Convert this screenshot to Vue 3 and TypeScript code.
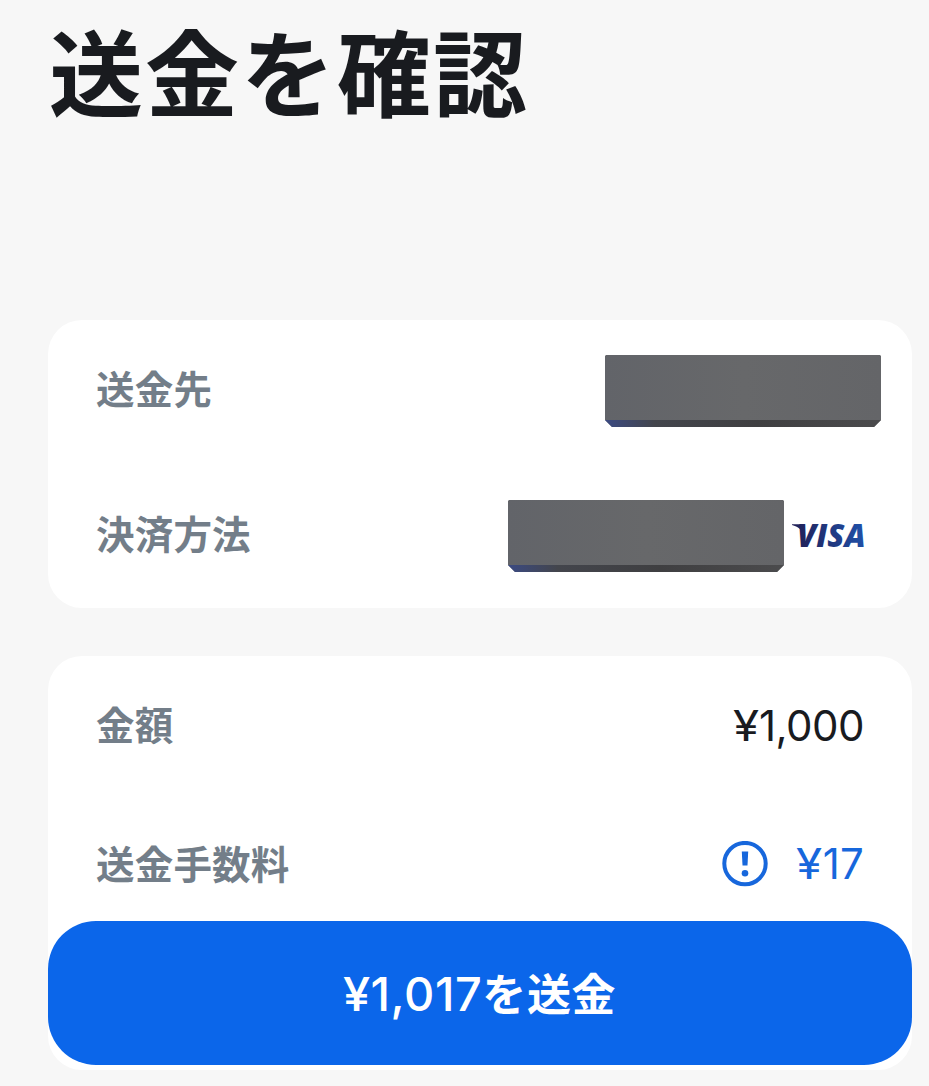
<script setup lang="ts">
interface Row {
  id: string
  label: string
  amount?: string
}

const recipientRows: Row[] = [
  { id: 'recipient', label: '送金先' },
  { id: 'method', label: '決済方法' },
]
const amountRows: Row[] = [
  { id: 'amount', label: '金額', amount: '1,000' },
  { id: 'fee', label: '送金手数料', amount: '17' },
]
</script>

<template>
  <main class="screen" lang="ja">
    <h1 class="title">送金を確認</h1>

    <section class="card parties">
      <div v-for="row in recipientRows" :key="row.id" class="row" :class="row.id">
        <span class="label">{{ row.label }}</span>
        <span class="mask"></span>
        <svg v-if="row.id === 'method'" class="visa" width="80" height="48" viewBox="0 0 80 48" role="img" aria-label="VISA">
          <defs>
            <linearGradient id="visa-fill" gradientUnits="userSpaceOnUse" x1="0" y1="30" x2="72" y2="16">
              <stop offset="0" stop-color="#211c50" />
              <stop offset="1" stop-color="#2050a8" />
            </linearGradient>
          </defs>
          <path d="M1 12.2 H9 Q12 12.2 12.6 15 L14 24 C11 17.5 7 14.5 1 13 Z" fill="url(#visa-fill)" />
          <text x="6" y="35" textLength="68.5" lengthAdjust="spacingAndGlyphs" fill="url(#visa-fill)">VISA</text>
        </svg>
      </div>
    </section>

    <section class="card totals">
      <div v-for="row in amountRows" :key="row.id" class="row" :class="row.id">
        <span class="label">{{ row.label }}</span>
        <svg v-if="row.id === 'fee'" class="notice" width="46" height="46" viewBox="0 0 46 46" aria-hidden="true">
          <circle cx="23" cy="22.6" r="20.7" fill="none" stroke="#1767dc" stroke-width="4" />
          <path d="M19.8 10.4 H26.2 L25.5 24.6 H20.5 Z" fill="#1767dc" />
          <circle cx="23" cy="32.2" r="3.3" fill="#1767dc" />
        </svg>
        <span class="value"><span class="yen">¥</span>{{ row.amount }}</span>
      </div>
      <button class="send" type="button"><span class="sum"><span class="yen">¥</span>1,017</span><span class="verb">を送金</span></button>
    </section>
  </main>
</template>

<style>
body {
  margin: 0;
  background: #f7f7f7;
}
</style>

<style scoped>
.screen {
  box-sizing: border-box;
  height: 1086px;
  padding: 13px 17px 0 48px;
  overflow: hidden;
  background: #f7f7f7;
  color: #191b1f;
  font-family: Inter, "Noto Sans CJK JP", sans-serif;
}
.title {
  height: 307px;
  margin: 0;
  padding-left: 1px;
  font: 700 94px/112px "Noto Sans CJK JP", sans-serif;
  letter-spacing: 2px;
}
.card {
  box-sizing: border-box;
  width: 864px;
  border-radius: 34px;
  background: #fff;
}
.parties {
  height: 288px;
  margin-bottom: 48px;
}
.totals {
  height: 414px;
}
.row {
  display: flex;
  align-items: center;
  box-sizing: border-box;
  padding: 0 48px;
}
.parties .row {
  height: 144px;
}
.parties .recipient {
  padding: 0 31px 2px 48px;
}
.totals .amount {
  height: 139px;
}
.totals .fee {
  height: 138px;
}
.label {
  margin-right: auto;
  padding-bottom: 5px;
  color: #737e89;
  font: 700 38.5px/56px "Noto Sans CJK JP", sans-serif;
  letter-spacing: 0.2px;
}
.parties .label {
  padding-bottom: 8px;
}
.mask {
  width: 276px;
  height: 72px;
  background:
    linear-gradient(90deg, #3b4a82 0, #43454c 18%, #3f3f41 55%, #4b4b4d 100%) 0 100% / 100% 7px no-repeat,
    linear-gradient(90deg, #626469, #67686a 50%, #646568);
  clip-path: polygon(0 1px, 1px 0, 275px 0, 276px 1px, 276px 65px, 269px 72px, 7px 72px, 0 65px);
}
.method .mask {
  margin-right: 7px;
}
.visa {
  margin-right: -7px;
}
.visa text {
  font: italic 800 32px "Open Sans", sans-serif;
}
.value {
  font-size: 42px;
  line-height: 56px;
  letter-spacing: -0.5px;
}
.yen {
  display: inline-block;
  transform: scaleX(1.13);
  transform-origin: 100% 50%;
}
.fee .value {
  color: #1767dc;
  letter-spacing: 0.2px;
}
.notice {
  margin-right: 31px;
}
.send {
  display: flex;
  align-items: center;
  justify-content: center;
  width: 864px;
  height: 144px;
  margin-top: -12px;
  padding: 0;
  border: 0;
  border-radius: 48px;
  background: #0b66ea;
  color: #fff;
}
.sum {
  padding-top: 2px;
  font: 500 47px/60px Inter, sans-serif;
  letter-spacing: 0.5px;
}
.sum .yen {
  transform: scaleX(1.04);
}
.verb {
  padding-bottom: 2px;
  font: 700 44px/60px "Noto Sans CJK JP", sans-serif;
  letter-spacing: 0.6px;
}
</style>
